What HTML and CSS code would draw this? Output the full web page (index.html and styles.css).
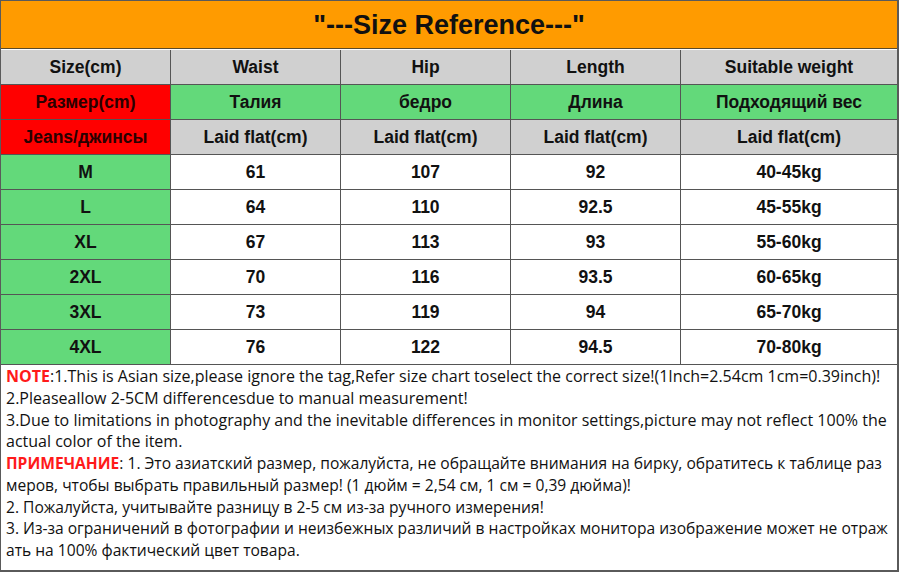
FILE: index.html
```html
<!DOCTYPE html>
<html lang="en">
<head>
<meta charset="utf-8">
<title>Size Reference</title>
<link rel="stylesheet" href="styles.css">
</head>
<body>
<div class="sheet">
  <div class="title">"---Size Reference---"</div>
  <div class="grid">
    <div class="cell grey">Size(cm)</div>
    <div class="cell grey">Waist</div>
    <div class="cell grey">Hip</div>
    <div class="cell grey">Length</div>
    <div class="cell grey">Suitable weight</div>

    <div class="cell red">Размер(cm)</div>
    <div class="cell green">Талия</div>
    <div class="cell green">бедро</div>
    <div class="cell green">Длина</div>
    <div class="cell green">Подходящий вес</div>

    <div class="cell red">Jeans/джинсы</div>
    <div class="cell grey">Laid flat(cm)</div>
    <div class="cell grey">Laid flat(cm)</div>
    <div class="cell grey">Laid flat(cm)</div>
    <div class="cell grey">Laid flat(cm)</div>

    <div class="cell green">M</div><div class="cell">61</div><div class="cell">107</div><div class="cell">92</div><div class="cell">40-45kg</div>
    <div class="cell green">L</div><div class="cell">64</div><div class="cell">110</div><div class="cell">92.5</div><div class="cell">45-55kg</div>
    <div class="cell green">XL</div><div class="cell">67</div><div class="cell">113</div><div class="cell">93</div><div class="cell">55-60kg</div>
    <div class="cell green">2XL</div><div class="cell">70</div><div class="cell">116</div><div class="cell">93.5</div><div class="cell">60-65kg</div>
    <div class="cell green">3XL</div><div class="cell">73</div><div class="cell">119</div><div class="cell">94</div><div class="cell">65-70kg</div>
    <div class="cell green">4XL</div><div class="cell">76</div><div class="cell">122</div><div class="cell">94.5</div><div class="cell">70-80kg</div>
  </div>
  <div class="notes">
    <div class="line"><span class="hl">NOTE</span>:1.This is Asian size,please ignore the tag,Refer size chart toselect the correct size!(1Inch=2.54cm 1cm=0.39inch)!</div>
    <div class="line">2.Pleaseallow 2-5CM differencesdue to manual measurement!</div>
    <div class="line">3.Due to limitations in photography and the inevitable differences in monitor settings,picture may not reflect 100% the</div>
    <div class="line">actual color of the item.</div>
    <div class="line ru"><span class="hl">ПРИМЕЧАНИЕ</span>: 1. Это азиатский размер, пожалуйста, не обращайте внимания на бирку, обратитесь к таблице раз</div>
    <div class="line ru">меров, чтобы выбрать правильный размер! (1 дюйм = 2,54 см, 1 см = 0,39 дюйма)!</div>
    <div class="line ru">2. Пожалуйста, учитывайте разницу в 2-5 см из-за ручного измерения!</div>
    <div class="line ru">3. Из-за ограничений в фотографии и неизбежных различий в настройках монитора изображение может не отраж</div>
    <div class="line ru">ать на 100% фактический цвет товара.</div>
  </div>
</div>
</body>
</html>
```

FILE: styles.css
```css
html, body {
  margin: 0;
  padding: 0;
  background: #ffffff;
}

.sheet {
  width: 899px;
  height: 572px;
  box-sizing: border-box;
  border: 1px solid #5a5a5a;
  border-right-width: 2px;
  border-bottom-width: 2px;
  display: flex;
  flex-direction: column;
  overflow: hidden;
}

.title {
  height: 48px;
  flex: none;
  background: #ff9b00;
  border-bottom: 1px solid #5a4a2a;
  display: flex;
  align-items: center;
  justify-content: center;
  padding-top: 2px;
  box-sizing: border-box;
  font-family: "Liberation Sans", Arial, sans-serif;
  font-weight: bold;
  font-size: 27px;
  color: #111;
}

.grid {
  display: grid;
  grid-template-columns: 170px 170px 170px 170px 1fr;
  grid-auto-rows: 35px;
  flex: none;
  margin-top: 1px;
}

.cell {
  box-sizing: border-box;
  border-right: 1px solid #555;
  border-bottom: 1px solid #555;
  display: flex;
  align-items: center;
  justify-content: center;
  padding-top: 1px;
  font-family: "Liberation Sans", Arial, sans-serif;
  font-weight: bold;
  font-size: 17.5px;
  color: #111;
  background: #ffffff;
}

.cell:nth-child(5n) {
  border-right: none;
}

.grey { background: #d0d0d0; }
.red { background: #ff0000; color: #2a0000; }
.green { background: #63d97a; }

.notes {
  flex: 1;
  padding: 1px 0 0 5px;
  font-family: "Open Sans", "Noto Sans", sans-serif;
  font-size: 16px;
  line-height: 21.75px;
  color: #111;
}

.line {
  white-space: nowrap;
}

.ru {
  font-size: 15.6px;
}

.hl {
  color: #ff1a1a;
  font-weight: bold;
}
```
